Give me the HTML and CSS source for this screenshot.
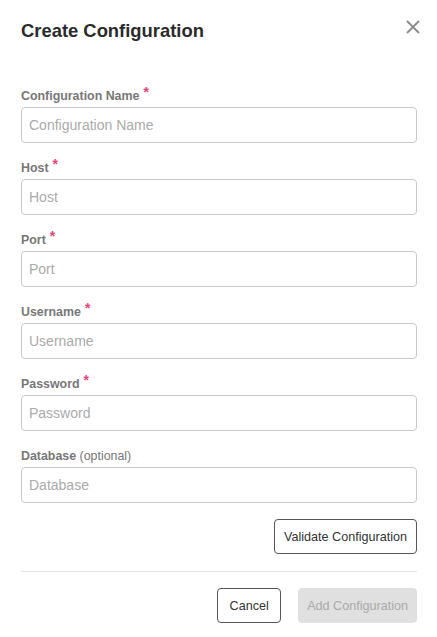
FILE: index.html
```html
<!DOCTYPE html>
<html lang="en">
<head>
  <meta charset="UTF-8">
  <meta name="viewport" content="width=device-width, initial-scale=1.0">
  <title>Create Configuration</title>
  <link rel="stylesheet" href="styles.css">
</head>
<body>
  <div class="dialog">
    <div class="dialog-header">
      <h1>Create Configuration</h1>
      <button class="close" aria-label="Close">
        <svg width="14" height="14" viewBox="0 0 14 14">
          <path d="M1 1 L13 13 M13 1 L1 13" stroke="#8a8a8a" stroke-width="1.8" fill="none"/>
        </svg>
      </button>
    </div>

    <div class="field">
      <label for="name">Configuration Name<span class="req">*</span></label>
      <input type="text" id="name" placeholder="Configuration Name">
    </div>
    <div class="field">
      <label for="host">Host<span class="req">*</span></label>
      <input type="text" id="host" placeholder="Host">
    </div>
    <div class="field">
      <label for="port">Port<span class="req">*</span></label>
      <input type="text" id="port" placeholder="Port">
    </div>
    <div class="field">
      <label for="user">Username<span class="req">*</span></label>
      <input type="text" id="user" placeholder="Username">
    </div>
    <div class="field">
      <label for="pass">Password<span class="req">*</span></label>
      <input type="password" id="pass" placeholder="Password">
    </div>
    <div class="field">
      <label for="db">Database <span class="opt">(optional)</span></label>
      <input type="text" id="db" placeholder="Database">
    </div>

    <div class="validate-row">
      <button class="btn btn-outline btn-validate">Validate Configuration</button>
    </div>

    <div class="divider"></div>

    <div class="actions">
      <button class="btn btn-outline">Cancel</button>
      <button class="btn btn-disabled" disabled>Add Configuration</button>
    </div>
  </div>
</body>
</html>
```

FILE: styles.css
```css
* { box-sizing: border-box; }
body {
  margin: 0;
  background: #fff;
  font-family: 'Liberation Sans', Arial, sans-serif;
  color: #333;
}
.dialog {
  padding: 20px 20px 14px 21px;
}
.dialog-header {
  display: flex;
  justify-content: space-between;
  align-items: flex-start;
  margin-bottom: 46px;
}
h1 {
  margin: 0;
  font-size: 18.4px;
  line-height: 22px;
  font-weight: bold;
  color: #2b2b2b;
}
.close {
  background: none;
  border: none;
  padding: 0;
  margin: 0 -3px 0 0;
  width: 14px;
  height: 14px;
  cursor: pointer;
  display: block;
}
.close svg { display: block; }
.field + .field { margin-top: 17px; }
label {
  display: block;
  font-size: 12.4px;
  line-height: 16px;
  font-weight: bold;
  color: #777;
  margin-bottom: 3px;
}
.req {
  color: #ee3f7c;
  font-size: 14px;
  line-height: 0;
  margin-left: 4px;
  position: relative;
  top: -3px;
}
.opt {
  font-weight: normal;
}
input {
  display: block;
  width: 100%;
  height: 36px;
  padding: 0 7px;
  border: 1px solid #c8c8c8;
  border-radius: 4px;
  font-family: 'Liberation Sans', Arial, sans-serif;
  font-size: 14px;
  color: #333;
  outline: none;
}
input::placeholder { color: #aaa; }
.validate-row {
  display: flex;
  justify-content: flex-end;
  margin-top: 16px;
}
.btn {
  height: 35px;
  min-width: 64px;
  padding: 0 8px;
  border-radius: 4px;
  font-family: 'Liberation Sans', Arial, sans-serif;
  font-size: 12.6px;
  cursor: pointer;
}
.btn-validate { padding: 0 9px; }
.btn-outline {
  background: #fff;
  border: 1px solid #555;
  color: #333;
}
.btn-disabled {
  background: #e0e0e0;
  border: 1px solid #e0e0e0;
  color: #aaa;
  cursor: default;
}
.divider {
  height: 1px;
  background: #e2e2e2;
  margin-top: 17px;
}
.actions {
  display: flex;
  justify-content: flex-end;
  gap: 17px;
  margin-top: 16px;
}
```
